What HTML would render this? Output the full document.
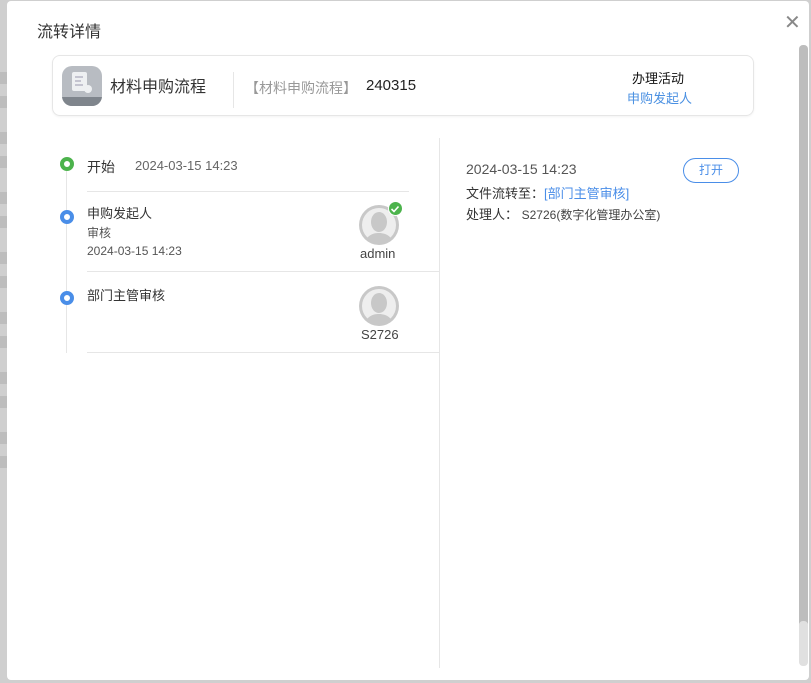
<!DOCTYPE html>
<html><head><meta charset="utf-8"><style>
*{margin:0;padding:0;box-sizing:border-box}
body{width:811px;height:683px;overflow:hidden;background:#cfcfcf;font-family:"Liberation Sans","Noto Sans CJK SC",sans-serif;position:relative}
.stripe{position:absolute;left:0;width:7px;height:12px;background:#bdbdbd}
.modal{position:absolute;left:7px;top:1px;width:802px;height:679px;background:#fff;border-radius:4px}
.t{position:absolute;font-size:14px;color:#333;white-space:nowrap}
</style></head><body>
<div class="stripe" style="top:72px"></div><div class="stripe" style="top:96px"></div><div class="stripe" style="top:132px"></div><div class="stripe" style="top:156px"></div><div class="stripe" style="top:192px"></div><div class="stripe" style="top:216px"></div><div class="stripe" style="top:252px"></div><div class="stripe" style="top:276px"></div><div class="stripe" style="top:312px"></div><div class="stripe" style="top:336px"></div><div class="stripe" style="top:372px"></div><div class="stripe" style="top:396px"></div><div class="stripe" style="top:432px"></div><div class="stripe" style="top:456px"></div>
<div class="modal">
<div class="t" style="left:30px;top:17px;font-size:16px;color:#333">流转详情</div>
<div class="t" style="left:777px;top:9px;font-size:20px;color:#888">✕</div>
<div style="position:absolute;left:792px;top:44px;width:9px;height:582px;background:#bdbdbd;border-radius:4px"></div>
<div style="position:absolute;left:792px;top:620px;width:9px;height:45px;background:#e0e0e0;border-radius:4px"></div>
<div style="position:absolute;left:45px;top:54px;width:702px;height:61px;border:1px solid #e6e6e6;border-radius:8px;box-shadow:0 1px 2px rgba(0,0,0,.05)">
 <div style="position:absolute;left:9px;top:10px;width:40px;height:40px;border-radius:10px;background:#b8bcc2;overflow:hidden">
  <svg width="40" height="40" viewBox="0 0 40 40"><rect x="10" y="6" width="15" height="19" rx="2" fill="#eef0f2"/><path d="M13 11h8M13 15h6M13 19h8" stroke="#aab" stroke-width="1.2"/><circle cx="26" cy="23" r="4" fill="#eef0f2"/><rect x="0" y="31" width="40" height="9" fill="#7f858c"/></svg>
 </div>
 <div class="t" style="left:57px;top:17px;font-size:16px;color:#333">材料申购流程</div>
 <div style="position:absolute;left:180px;top:16px;width:1px;height:36px;background:#e6e6e6"></div>
 <div class="t" style="left:192px;top:22px;color:#999">【材料申购流程】</div>
 <div class="t" style="left:313px;top:21px;font-size:15px;color:#222">240315</div>
 <div class="t" style="left:579px;top:12px;color:#111;font-size:13px">办理活动</div>
 <div class="t" style="left:574px;top:32px;color:#4a90e2;font-size:13px">申购发起人</div>
</div>
<div style="position:absolute;left:59px;top:170px;width:1px;height:182px;background:#e6e6e6"></div>
<div style="position:absolute;left:53px;top:156px;width:14px;height:14px;border-radius:50%;border:4px solid #4cb34c;background:#fff"></div>
<div style="position:absolute;left:53px;top:209px;width:14px;height:14px;border-radius:50%;border:4px solid #4a8ee8;background:#fff"></div>
<div style="position:absolute;left:53px;top:290px;width:14px;height:14px;border-radius:50%;border:4px solid #4a8ee8;background:#fff"></div>
<div class="t" style="left:80px;top:156px">开始</div>
<div class="t" style="left:128px;top:157px;color:#666;font-size:13px">2024-03-15 14:23</div>
<div style="position:absolute;left:80px;top:190px;width:322px;height:1px;background:#e6e6e6"></div>
<div class="t" style="left:80px;top:202px;font-size:13px">申购发起人</div>
<div class="t" style="left:80px;top:223px;font-size:12px;color:#555">审核</div>
<div class="t" style="left:80px;top:243px;font-size:12px;color:#555">2024-03-15 14:23</div>
<div style="position:absolute;left:80px;top:270px;width:352px;height:1px;background:#e6e6e6"></div>
<div class="t" style="left:80px;top:284px;font-size:13px">部门主管审核</div>
<div style="position:absolute;left:80px;top:351px;width:352px;height:1px;background:#e6e6e6"></div>
<svg style="position:absolute;left:352px;top:204px" width="40" height="40" viewBox="0 0 40 40"><clipPath id="c1"><circle cx="20" cy="20" r="19"/></clipPath><circle cx="20" cy="20" r="20" fill="#c8c8c8"/><circle cx="20" cy="20" r="17" fill="#eee"/><g clip-path="url(#c1)"><ellipse cx="20" cy="17" rx="8" ry="10" fill="#c8c8c8"/><path d="M5 40c2-9 8-12 15-12s13 3 15 12z" fill="#c8c8c8"/></g></svg>
<div style="position:absolute;left:381px;top:200px;width:15px;height:15px;border-radius:50%;background:#4cb34c;border:1.5px solid #fff"><svg width="12" height="12" viewBox="0 0 12 12"><path d="M2.5 6l2.5 2.5 4.5-5" stroke="#fff" stroke-width="1.6" fill="none"/></svg></div>
<div class="t" style="left:353px;top:245px;font-size:13px;color:#444">admin</div>
<svg style="position:absolute;left:352px;top:285px" width="40" height="40" viewBox="0 0 40 40"><clipPath id="c2"><circle cx="20" cy="20" r="19"/></clipPath><circle cx="20" cy="20" r="20" fill="#c8c8c8"/><circle cx="20" cy="20" r="17" fill="#eee"/><g clip-path="url(#c2)"><ellipse cx="20" cy="17" rx="8" ry="10" fill="#c8c8c8"/><path d="M5 40c2-9 8-12 15-12s13 3 15 12z" fill="#c8c8c8"/></g></svg>
<div class="t" style="left:354px;top:326px;font-size:13px;color:#444">S2726</div>
<div style="position:absolute;left:432px;top:137px;width:1px;height:530px;background:#e6e6e6"></div>
<div class="t" style="left:459px;top:160px;font-size:14px;color:#555">2024-03-15 14:23</div>
<div style="position:absolute;left:676px;top:157px;width:56px;height:25px;border:1px solid #4a8ee8;border-radius:13px;color:#4a8ee8;font-size:12px;text-align:center;line-height:23px">打开</div>
<div class="t" style="left:459px;top:182px;font-size:13px">文件流转至：<span style="color:#4a8ee8">[部门主管审核]</span></div>
<div class="t" style="left:459px;top:203px;font-size:13px">处理人： <span style="font-size:12px;color:#444">S2726(数字化管理办公室)</span></div>
</div>
</body></html>
